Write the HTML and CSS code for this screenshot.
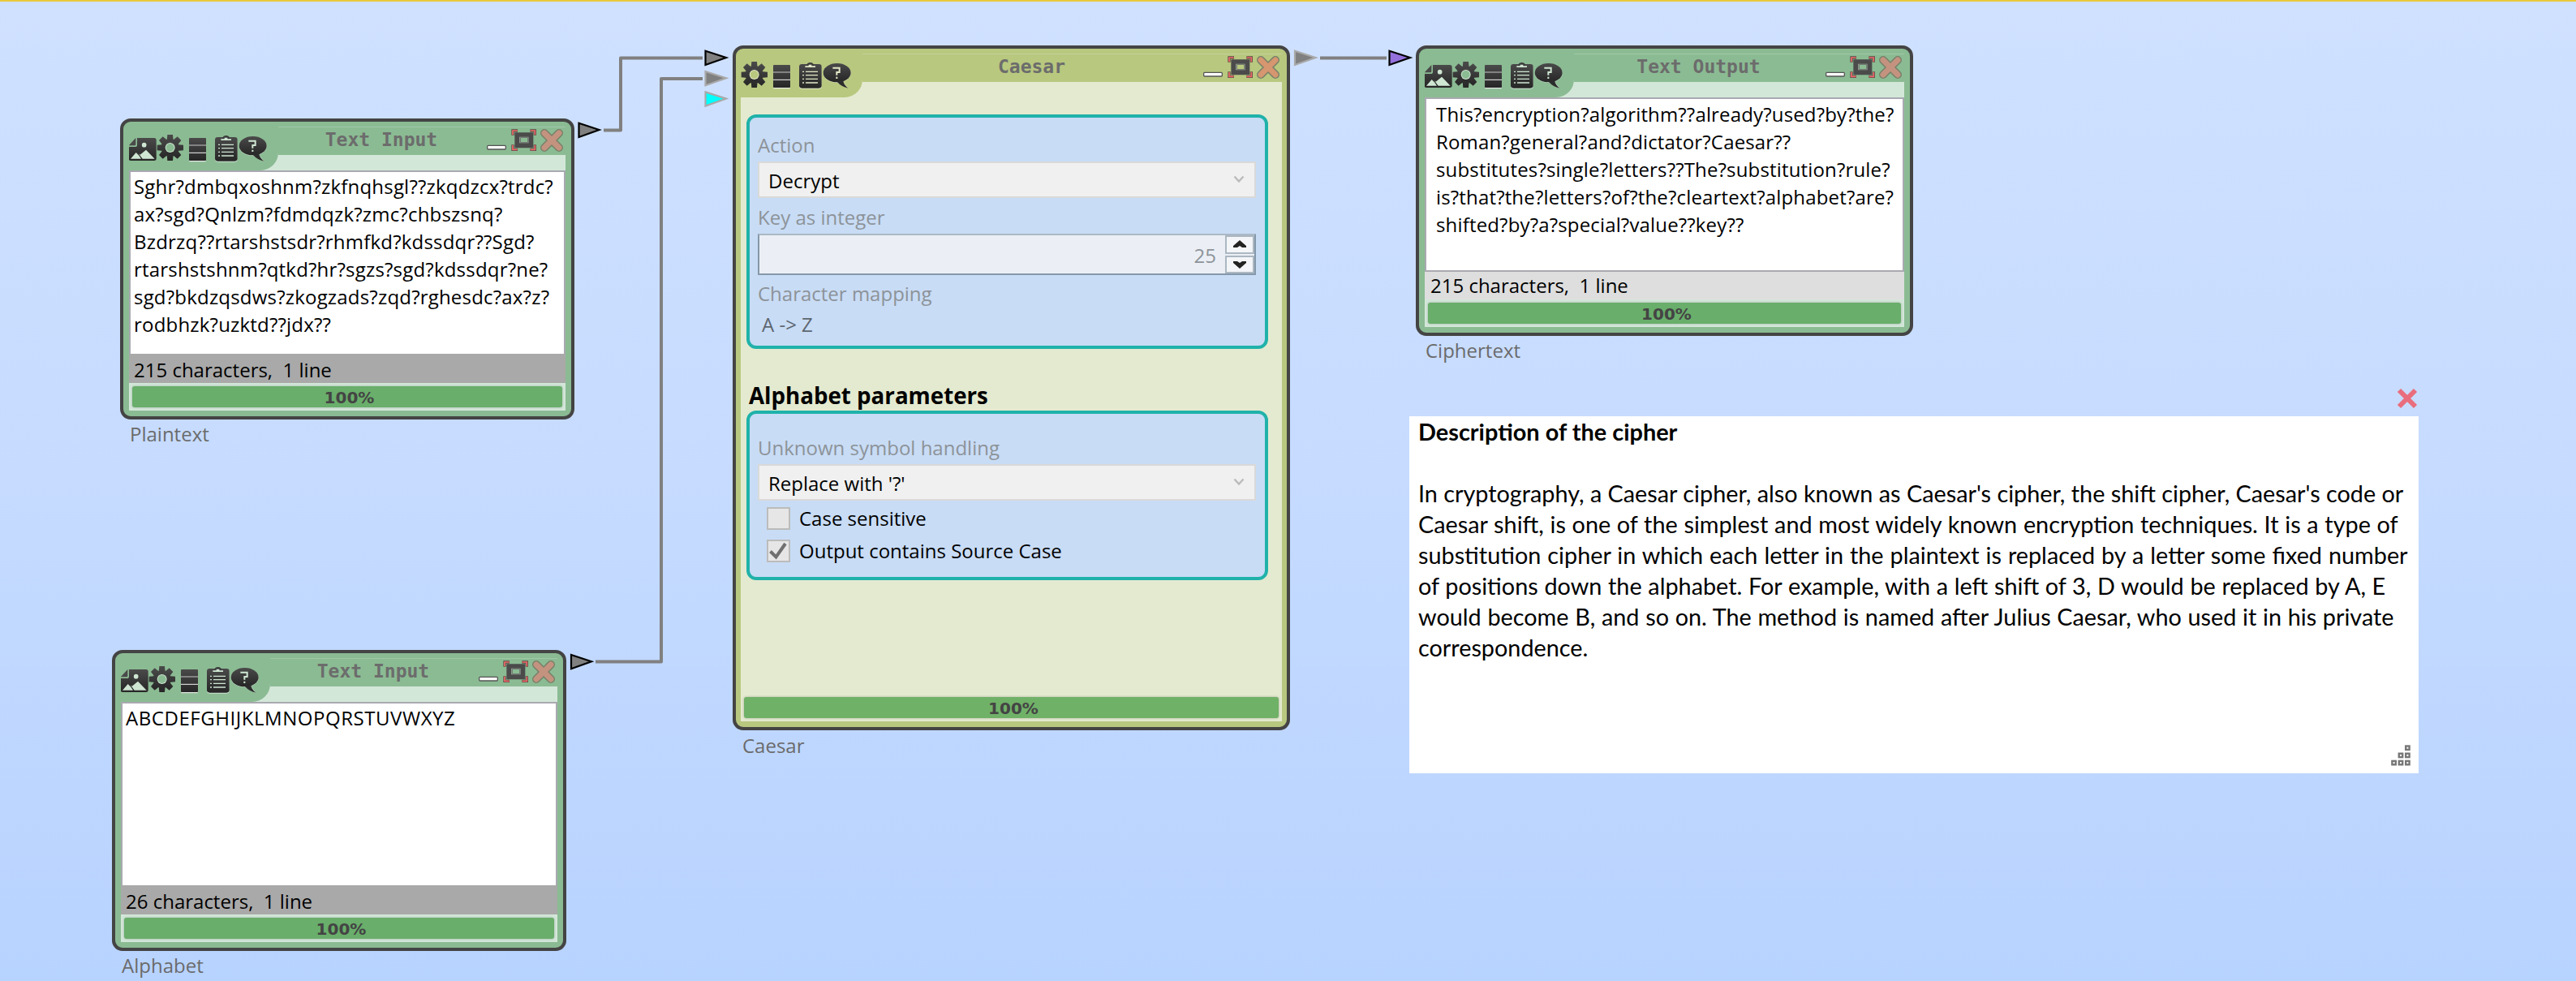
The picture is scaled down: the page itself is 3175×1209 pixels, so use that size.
FILE: index.html
```html
<!DOCTYPE html>
<html lang="en">
<head>
<meta charset="utf-8">
<title>Caesar cipher workspace</title>
<link rel="stylesheet" href="styles.css">
</head>
<body>
<svg class="defs" width="0" height="0">
  <defs>
    <linearGradient id="ink" x1="0" y1="0" x2="0" y2="1">
      <stop offset="0" stop-color="#4a4a4a"/>
      <stop offset="1" stop-color="#262626"/>
    </linearGradient>
    <g id="icon-picture">
      <path fill="url(#ink)" d="M57 60H120Q128 60 128 68V136Q128 144 120 144H34Q26 144 26 136V93H49Q57 93 57 86Z"/>
      <path fill="#4a4a4a" d="M26 88L52 60V84Q52 88 48 88Z"/>
      <circle cx="83" cy="86" r="8.5" fill="var(--icon-light)"/>
      <path fill="var(--icon-light)" d="M33 137L53 114L64 125L72 137ZM62 117L68 122L90 104L122 137H77Z"/>
    </g>
    <g id="icon-tools">
      <g fill="url(#ink)">
        <circle cx="179" cy="96" r="33"/>
        <path d="M169 48H189L191 72H167ZM169 144H189L191 120H167ZM131 86V106L155 108V84ZM228 86V106L203 108V84Z"/>
        <path d="M138 69L152 55L172 71L154 89ZM220 69L206 55L186 71L204 89ZM138 123L152 137L172 121L154 103ZM220 123L206 137L186 121L204 103Z"/>
      </g>
      <circle cx="179" cy="96" r="18" fill="var(--icon-light)"/>
      <circle cx="179" cy="96" r="15" fill="var(--head)"/>
      <rect x="249" y="60" width="63" height="84" rx="3" fill="url(#ink)"/>
      <path stroke="#9a9a9a" stroke-width="4" d="M249 87H312"/>
      <path stroke="#f4f4f4" stroke-width="3" d="M249 115H312M250 146H311"/>
      <rect x="345" y="59" width="83" height="90" rx="10" fill="var(--icon-light)"/>
      <rect x="345" y="57" width="83" height="89" rx="10" fill="url(#ink)"/>
      <path fill="#3c3c3c" d="M372 62Q374 52 386 51Q398 52 400 62Z"/>
      <path fill="var(--icon-light)" d="M367 64H380V59H391V64H405V69H367Z"/>
      <path stroke="var(--icon-light)" stroke-width="4" d="M369 85H414M369 98H414M369 112H414M369 126H414"/>
      <path stroke="var(--icon-light)" stroke-width="4" d="M357 85H363M357 98H363M357 112H363M357 126H363"/>
      <path fill="var(--icon-light)" d="M506 120L527 148L488 128Z"/>
      <ellipse cx="485" cy="91" rx="51" ry="35" fill="var(--icon-light)"/>
      <ellipse cx="485" cy="89" rx="51" ry="35" fill="url(#ink)"/>
      <path fill="#2c2c2c" d="M507 115Q510 136 527 146Q500 140 485 122Z"/>
      <path fill="none" stroke="var(--icon-light)" stroke-width="6" d="M472 74V71H494V87H484V98M484 104V111"/>
    </g>
    <g id="icon-window">
      <rect x="62" y="118" width="68" height="14" rx="3" fill="#fff" stroke="#555" stroke-width="4"/>
      <g fill="none" stroke="#5a4a46" stroke-width="10">
        <path d="M156 80V63H174M220 63H238V80M156 115V133H174M220 133H238V115"/>
      </g>
      <g fill="none" stroke="#f06a6a" stroke-width="5">
        <path d="M156 79V63H173M221 63H238V79M156 116V133H173M221 133H238V116"/>
      </g>
      <rect x="163" y="70" width="69" height="57" rx="3" fill="#4b4b4b"/>
      <rect x="180" y="86" width="35" height="23" fill="#8d9a8e"/>
      <rect x="185" y="89" width="27" height="17" fill="var(--head)" stroke="#666" stroke-width="2"/>
      <path stroke="#77806a" stroke-width="30" stroke-linecap="round" d="M273 72L327 126M327 72L273 126"/>
      <path stroke="var(--cross)" stroke-width="21" stroke-linecap="round" d="M273 72L327 126M327 72L273 126"/>
    </g>
  </defs>
</svg>

<main class="workspace">
  <svg class="wires" width="3175" height="1209" viewBox="0 0 3175 1209">
    <g fill="none" stroke="#808080" stroke-width="4" stroke-linejoin="round">
      <path d="M744 160.5H765V71.5H866"/>
      <path d="M734 815.5H815V97H866"/>
      <path d="M1627 71.5H1709"/>
    </g>
    <g stroke="#000" stroke-width="2.2" stroke-miterlimit="8">
      <path fill="#808080" d="M713.5 151.8L738.5 160L713.5 169Z"/>
      <path fill="#808080" d="M704 807L729 815.2L704 824.2Z"/>
      <path fill="#808080" d="M869.5 62.8L895 71L869.5 80Z"/>
      <path fill="#9370db" d="M1712.5 62.8L1738 71L1712.5 80Z"/>
    </g>
    <g stroke="#a9a9a9" stroke-width="2.2" stroke-miterlimit="8">
      <path fill="#808080" d="M869.5 88L895 96.2L869.5 105.2Z"/>
      <path fill="#0ff" d="M869.5 113.4L895 121.6L869.5 130.6Z"/>
      <path fill="#808080" d="M1596 62.8L1621.5 71L1596 80Z"/>
    </g>
  </svg>

  <section class="node node-plain">
    <div class="card">
      <div class="inner">
        <header class="head">
          <svg class="tab" width="184" height="54" viewBox="27 18 552 162"><use href="#icon-picture"/><use href="#icon-tools"/></svg>
          <div class="bar"><h2 class="title">Text Input</h2><svg width="100" height="35" viewBox="51 48 300 105"><use href="#icon-window"/></svg></div>
        </header>
        <div class="text">Sghr?dmbqxoshnm?zkfnqhsgl??zkqdzcx?trdc?<br>ax?sgd?Qnlzm?fdmdqzk?zmc?chbszsnq?<br>Bzdrzq??rtarshstsdr?rhmfkd?kdssdqr??Sgd?<br>rtarshstshnm?qtkd?hr?sgzs?sgd?kdssdqr?ne?<br>sgd?bkdzqsdws?zkogzads?zqd?rghesdc?ax?z?<br>rodbhzk?uzktd??jdx??</div>
        <div class="status">215 characters,  1 line</div>
        <div class="progress">100%</div>
      </div>
    </div>
    <p class="caption">Plaintext</p>
  </section>

  <section class="node node-alphabet">
    <div class="card">
      <div class="inner">
        <header class="head">
          <svg class="tab" width="184" height="54" viewBox="27 18 552 162"><use href="#icon-picture"/><use href="#icon-tools"/></svg>
          <div class="bar"><h2 class="title">Text Input</h2><svg width="100" height="35" viewBox="51 48 300 105"><use href="#icon-window"/></svg></div>
        </header>
        <div class="text text-caps">ABCDEFGHIJKLMNOPQRSTUVWXYZ</div>
        <div class="status">26 characters,  1 line</div>
        <div class="progress">100%</div>
      </div>
    </div>
    <p class="caption">Alphabet</p>
  </section>

  <section class="node node-caesar">
    <div class="card">
      <div class="inner">
        <header class="head">
          <svg class="tab" width="150" height="54" viewBox="129 18 450 162"><use href="#icon-tools"/></svg>
          <div class="bar"><h2 class="title">Caesar</h2><svg width="100" height="35" viewBox="51 48 300 105"><use href="#icon-window"/></svg></div>
        </header>
        <div class="settings">
          <div class="group group-main">
            <span class="label">Action</span>
            <div class="select">Decrypt<svg width="14" height="10" viewBox="0 0 14 10"><path d="M1.5 1.5L7 7.5L12.5 1.5" fill="none" stroke="#bbb" stroke-width="2.4"/></svg></div>
            <span class="label label-key">Key as integer</span>
            <div class="spinner">
              <span class="amount">25</span>
              <div class="steps">
                <span class="step"><svg width="16" height="10" viewBox="0 0 16 10"><path d="M8 0L16 7V9H11L8 7L5 9H0V7Z" fill="#222"/></svg></span>
                <span class="step"><svg width="16" height="10" viewBox="0 0 16 10"><path d="M8 10L16 3V1H11L8 3L5 1H0V3Z" fill="#222"/></svg></span>
              </div>
            </div>
            <span class="label label-map">Character mapping</span>
            <span class="mapping">A -&gt; Z</span>
          </div>
          <h3 class="heading">Alphabet parameters</h3>
          <div class="group group-alpha">
            <span class="label">Unknown symbol handling</span>
            <div class="select">Replace with '?'<svg width="14" height="10" viewBox="0 0 14 10"><path d="M1.5 1.5L7 7.5L12.5 1.5" fill="none" stroke="#bbb" stroke-width="2.4"/></svg></div>
            <div class="checks">
              <div class="check"><span class="box"></span>Case sensitive</div>
              <div class="check"><span class="box"><svg width="24" height="24" viewBox="0 0 24 24"><path d="M2.5 12.5L9.5 19.5L21 3" fill="none" stroke="#707070" stroke-width="4"/></svg></span>Output contains Source Case</div>
            </div>
          </div>
        </div>
        <div class="progress">100%</div>
      </div>
    </div>
    <p class="caption">Caesar</p>
  </section>

  <section class="node node-output">
    <div class="card">
      <div class="inner">
        <header class="head">
          <svg class="tab" width="184" height="54" viewBox="27 18 552 162"><use href="#icon-picture"/><use href="#icon-tools"/></svg>
          <div class="bar"><h2 class="title">Text Output</h2><svg width="100" height="35" viewBox="51 48 300 105"><use href="#icon-window"/></svg></div>
        </header>
        <div class="text">This?encryption?algorithm??already?used?by?the?<br>Roman?general?and?dictator?Caesar??<br>substitutes?single?letters??The?substitution?rule?<br>is?that?the?letters?of?the?cleartext?alphabet?are?<br>shifted?by?a?special?value??key??</div>
        <div class="status">215 characters,  1 line</div>
        <div class="progress">100%</div>
      </div>
    </div>
    <p class="caption">Ciphertext</p>
  </section>

  <section class="note">
    <svg class="note-close" width="26" height="26" viewBox="0 0 26 26"><path d="M3 3L23 23M23 3L3 23" stroke="#e96d7c" stroke-width="6"/></svg>
    <h3 class="note-title">Description of the cipher</h3>
    <p class="note-body">In cryptography, a Caesar cipher, also known as Caesar's cipher, the shift cipher, Caesar's code or<br><span class="loose">Caesar shift, is one of the simplest and most widely known encryption techniques. It is a type of</span><br><span class="looser">substitution cipher in which each letter in the plaintext is replaced by a letter some fixed number</span><br><span class="loose">of positions down the alphabet. For example, with a left shift of 3, D would be replaced by A, E</span><br><span class="loose">would become B, and so on. The method is named after Julius Caesar, who used it in his private</span><br>correspondence.</p>
    <svg class="note-grip" width="24" height="26" viewBox="0 0 24 26">
      <g fill="#fff" stroke="#777" stroke-width="2.4">
        <rect x="18.2" y="1.5" width="4.4" height="4.4"/>
        <rect x="9.8" y="10.7" width="4.4" height="4.4"/><rect x="18.2" y="10.7" width="4.4" height="4.4"/>
        <rect x="1.4" y="19.9" width="4.4" height="4.4"/><rect x="9.8" y="19.9" width="4.4" height="4.4"/><rect x="18.2" y="19.9" width="4.4" height="4.4"/>
      </g>
    </svg>
  </section>
</main>
</body>
</html>
```
FILE: styles.css
```css
* { box-sizing: border-box; }

body {
  margin: 0;
  font: 24px/34px "Open Sans", "Noto Sans", sans-serif;
  color: #000;
}

h2, h3, p { margin: 0; }

.defs { display: block; position: absolute; }

/* free canvas holding the nodes */
.workspace {
  position: relative;
  width: 3175px;
  height: 1209px;
  overflow: hidden;
  border-top: 2px solid #e9c93c;
  background: linear-gradient(#cfe1ff 0%, #c6dbff 48%, #b7d3ff 100%);
}

.wires { position: absolute; left: 0; top: -2px; }

/* nodes */
.node {
  --head: #8bbb93;
  --body: #d3e7d9;
  --icon-light: #cfe6d3;
  --cross: #c4937f;
  --done: #69ae6b;
  position: absolute;
}
.node-plain { left: 148px; top: 144px; width: 560px; }
.node-alphabet { left: 138px; top: 799px; width: 560px; }
.node-caesar {
  --head: #b8c87f;
  --body: #e4ead0;
  --icon-light: #e2e9c8;
  --cross: #d6966f;
  --done: #70b168;
  left: 903px; top: 54px; width: 687px;
}
.node-output { left: 1745px; top: 54px; width: 613px; }

.card {
  display: flex;
  height: 371px;
  padding: 6px 7px 7px;
  border: 4px solid #444;
  border-radius: 13px;
  background: var(--head);
}
.node-caesar .card { height: 844px; padding: 6px 6px 7px; }
.node-output .card { height: 358px; }

.inner {
  flex: 1;
  display: flex;
  flex-direction: column;
  background: var(--body);
}

.head { display: flex; height: 54px; }
.tab {
  flex: none;
  display: block;
  background: var(--head);
  border-bottom-right-radius: 22px;
}
.bar {
  flex: 1;
  display: flex;
  height: 35px;
  background: var(--head);
  border-top: 1px solid rgba(255, 255, 255, .18);
}
.bar svg { margin-top: -1px; }
.title {
  flex: 1;
  text-align: center;
  font: bold 23px/31px "DejaVu Sans Mono", "Liberation Mono", monospace;
  color: #6c6c6c;
}

.text {
  flex: 1;
  padding: 1px 0 0 4px;
  border: 2px solid #a9a9b1;
  border-bottom: 0;
  background: #fff;
  letter-spacing: .2px;
  white-space: nowrap;
}
.text-caps { letter-spacing: .55px; }
.status {
  height: 36px;
  padding: 4px 0 0 6px;
  background: #a9a9a9;
  line-height: 32px;
  white-space: pre;
}
.node-output .text { padding: 2px 0 0 12px; border-bottom: 2px solid #a9a9b1; letter-spacing: .16px; }
.node-output .status { height: 34px; padding: 1px 0 0 7px; background: #dedede; }

.progress {
  height: 26px;
  margin: 4px;
  padding-left: 5px;
  border-radius: 3px;
  background: var(--done);
  box-shadow: 0 0 3px rgba(0, 0, 0, .25);
  font: bold 20px/28px "DejaVu Sans", sans-serif;
  color: #444;
  text-align: center;
}

.caption { margin-top: 1px; padding-left: 12px; color: #6b6b6b; }
.node-caesar .caption { margin-top: 2px; }

/* cipher settings */
.settings { flex: 1; padding: 21px 17px 0 7px; }
.group {
  display: flex;
  flex-direction: column;
  padding: 0 11px 0 10px;
  border: 4px solid #20b2aa;
  border-radius: 12px;
  background: #c8dcf5;
}
.group-main { height: 289px; padding-top: 17px; }
.group-alpha { height: 209px; padding-top: 25px; }
.label { color: #8d9399; }
.label-key { margin-top: 7px; }
.label-map { margin-top: 6px; }
.mapping { margin-top: 4px; padding-left: 5px; color: #5d6670; }
.select {
  display: flex;
  align-items: center;
  justify-content: space-between;
  height: 45px;
  margin-top: 3px;
  padding: 3px 12px 0 11px;
  border: 2px solid #d9d9d9;
  background: #f0f0f0;
}
.select svg { margin-top: -5px; }
.spinner {
  display: flex;
  justify-content: flex-end;
  height: 51px;
  margin-top: 3px;
  border: 2px solid #8598ab;
  border-top-color: #abb9c6;
  background: #ebeff5;
}
.amount { padding: 8px 11px 0 0; color: #8d9399; }
.steps { display: flex; flex-direction: column; gap: 2px; width: 36px; }
.step {
  flex: 1;
  display: flex;
  align-items: center;
  justify-content: center;
  border: 2px solid #abb7c2;
  background: #f3f5f8;
}
.heading {
  margin: 38px 0 0 3px;
  font-size: 27.7px;
  line-height: 38px;
}
.checks { display: flex; flex-direction: column; gap: 6px; padding: 5px 0 0 11px; }
.check { display: flex; align-items: center; gap: 11px; }
.box {
  width: 29px;
  height: 28px;
  border: 2px solid #bcbcbc;
  background: #e6e6e6;
}
.box svg { display: block; }

/* description note */
.note {
  position: absolute;
  left: 1737px;
  top: 511px;
  width: 1244px;
  height: 440px;
  padding-left: 11px;
  background: #fff;
  font: 28.8px/38px Lato, "Open Sans", sans-serif;
  white-space: nowrap;
}
.note-title { font-size: 28.9px; line-height: 38px; }
.note-body { margin-top: 38px; }
.loose { word-spacing: .32px; }
.looser { word-spacing: .62px; }
.note-close { position: absolute; right: 1px; top: -35px; }
.note-grip { position: absolute; right: 10px; bottom: 9px; }
```
